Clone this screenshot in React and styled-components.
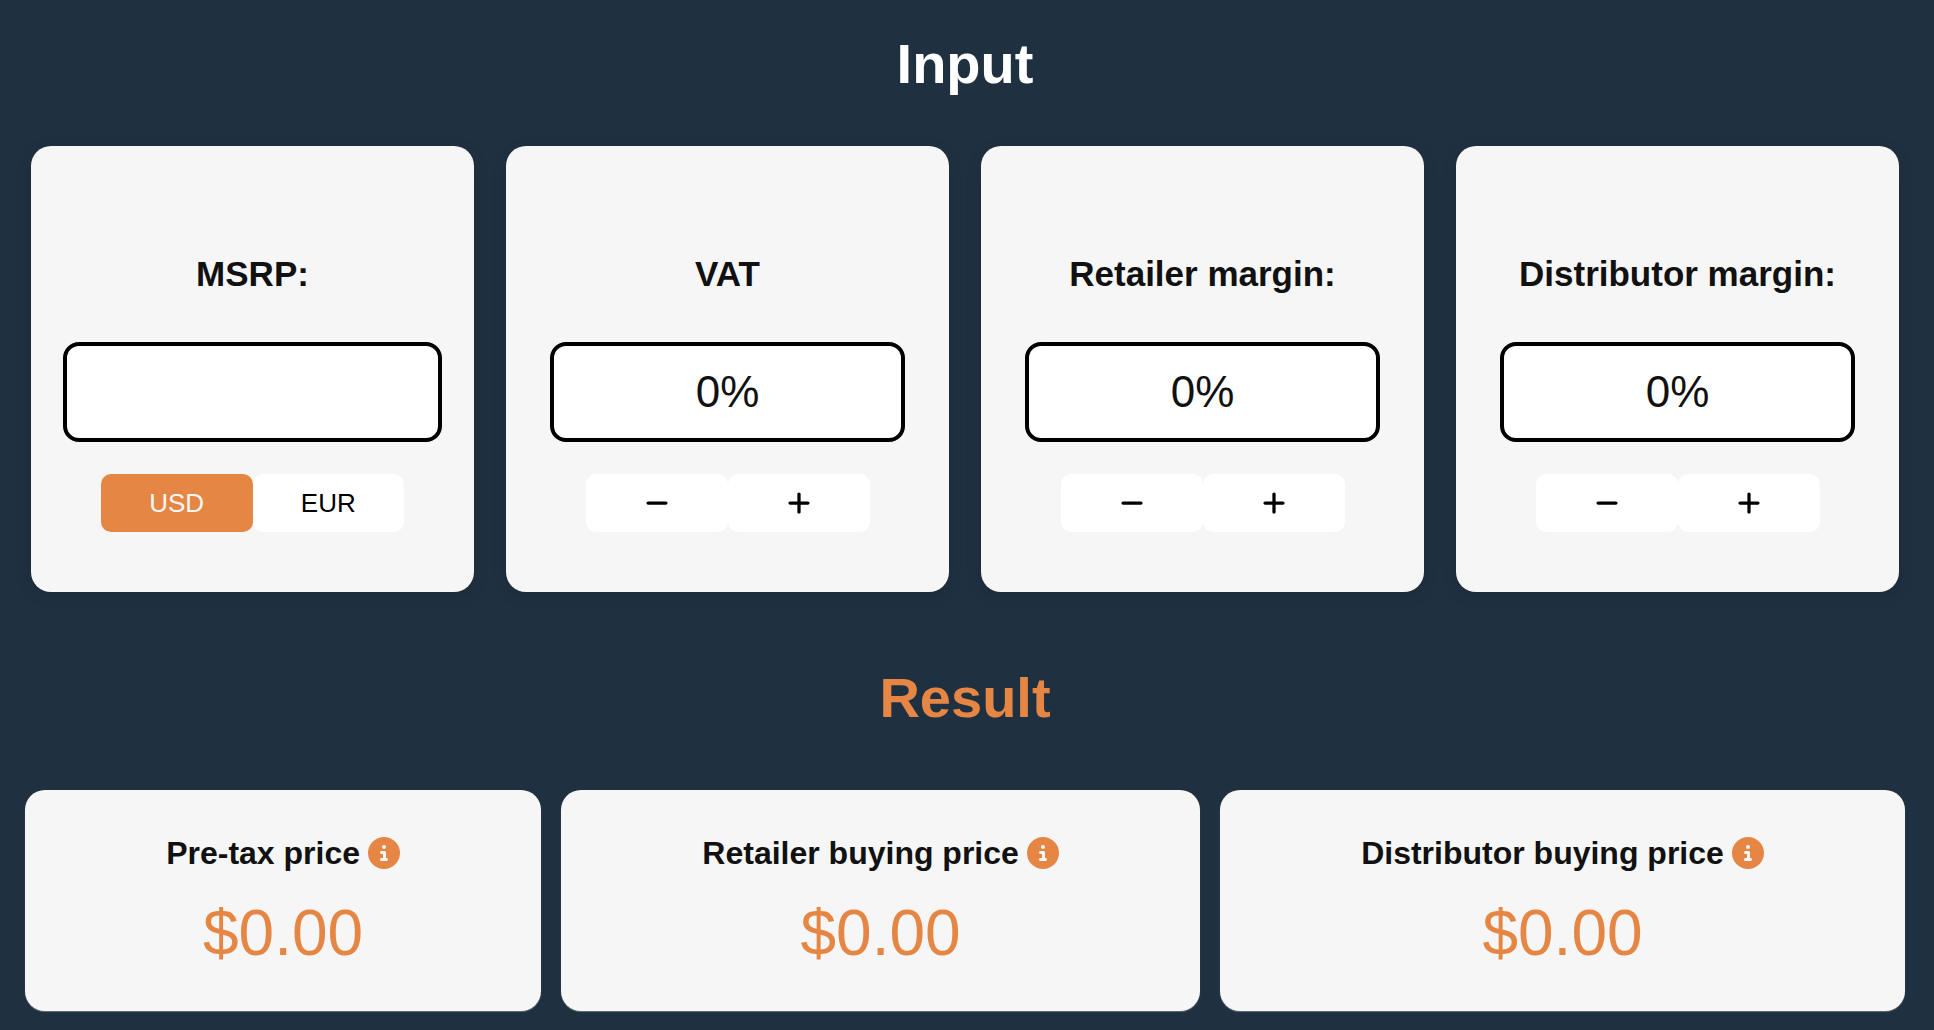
import React, { useState } from "react";
import styled, { createGlobalStyle } from "styled-components";
import { FaCircleInfo, FaMinus, FaPlus } from "react-icons/fa6";

const GlobalStyle = createGlobalStyle`
  * {
    box-sizing: border-box;
  }
  body {
    margin: 0;
    background: #1f3040;
    color: #111;
    font-family: "Liberation Sans", Arial, sans-serif;
  }
`;

const Page = styled.main`
  padding: 32px 29px 19px 25px;
`;

const SectionTitle = styled.h1`
  margin: 0;
  color: ${(props) => (props.$accent ? "#e68644" : "#fff")};
  font-size: 56px;
  line-height: 64px;
  text-align: center;
`;

const InputRow = styled.section`
  display: grid;
  grid-template-columns: repeat(4, 1fr);
  gap: 32px;
  margin: 50px 6px 74px;
`;

const InputCard = styled.div`
  display: flex;
  flex-direction: column;
  align-items: center;
  padding: 107px ${(props) => (props.$narrow ? 44 : 32)}px 60px;
  border-radius: 20px;
  background: #f6f6f6;
  box-shadow: 0 4px 16px rgba(0, 0, 0, 0.1);
`;

const Label = styled.label`
  margin-bottom: 47px;
  font-size: 35px;
  font-weight: bold;
  line-height: 42px;
  white-space: nowrap;
`;

const Field = styled.input`
  width: 100%;
  height: 100px;
  padding: 0 16px;
  border: 4px solid #000;
  border-radius: 16px;
  background: #fff;
  color: #111;
  font-family: inherit;
  font-size: 44px;
  text-align: center;
  outline: none;
`;

const ButtonGroup = styled.div`
  display: flex;
  width: 80%;
  margin-top: 32px;
`;

const Button = styled.button`
  display: flex;
  flex: 1;
  align-items: center;
  justify-content: center;
  height: 58px;
  padding: 0;
  border: none;
  border-radius: 10px;
  background: ${(props) => (props.$active ? "#e68644" : "#fff")};
  color: ${(props) => (props.$active ? "#f6f6f6" : "#000")};
  font-family: inherit;
  font-size: 26px;
  cursor: pointer;
  svg {
    width: 26px;
    height: 26px;
  }
`;

const ResultRow = styled.section`
  display: flex;
  gap: 20px;
  margin-top: 60px;
`;

const ResultCard = styled.div`
  display: flex;
  flex: 1 1 auto;
  flex-direction: column;
  align-items: center;
  gap: 25px;
  padding: 45px 32px 41px;
  border-radius: 20px;
  background: #f6f6f6;
  box-shadow: 0 1px 1px rgba(255, 255, 255, 0.3);
`;

const ResultTitle = styled.div`
  display: flex;
  align-items: center;
  gap: 8px;
  h2 {
    margin: 0;
    font-size: 32px;
    line-height: 36px;
    white-space: nowrap;
  }
`;

const InfoButton = styled.button`
  display: flex;
  padding: 0;
  border: none;
  background: none;
  color: #e68644;
  font-size: 32px;
  cursor: pointer;
`;

const Price = styled.span`
  color: #e68644;
  font-size: 64px;
  line-height: 74px;
`;

function MsrpCard({ value, onChange, currency, onCurrency }) {
  return (
    <InputCard>
      <Label htmlFor="msrp">MSRP:</Label>
      <Field
        id="msrp"
        inputMode="decimal"
        value={value}
        onChange={(e) => onChange(e.target.value)}
      />
      <ButtonGroup>
        {["USD", "EUR"].map((code) => (
          <Button
            key={code}
            type="button"
            $active={currency === code}
            onClick={() => onCurrency(code)}
          >
            {code}
          </Button>
        ))}
      </ButtonGroup>
    </InputCard>
  );
}

function PercentCard({ id, label, value, onChange }) {
  const update = (next) => onChange(Math.min(99, Math.max(0, next)));

  return (
    <InputCard $narrow>
      <Label htmlFor={id}>{label}</Label>
      <Field
        id={id}
        inputMode="numeric"
        value={`${value}%`}
        onChange={(e) => update(parseInt(e.target.value, 10) || 0)}
      />
      <ButtonGroup>
        <Button
          type="button"
          aria-label="Decrease"
          onClick={() => update(value - 1)}
        >
          <FaMinus />
        </Button>
        <Button
          type="button"
          aria-label="Increase"
          onClick={() => update(value + 1)}
        >
          <FaPlus />
        </Button>
      </ButtonGroup>
    </InputCard>
  );
}

function Result({ title, price, symbol }) {
  return (
    <ResultCard>
      <ResultTitle>
        <h2>{title}</h2>
        <InfoButton type="button" aria-label="More info">
          <FaCircleInfo />
        </InfoButton>
      </ResultTitle>
      <Price>
        {symbol}
        {price.toFixed(2)}
      </Price>
    </ResultCard>
  );
}

function App() {
  const [msrp, setMsrp] = useState("");
  const [currency, setCurrency] = useState("USD");
  const [vat, setVat] = useState(0);
  const [retailer, setRetailer] = useState(0);
  const [distributor, setDistributor] = useState(0);

  const symbol = currency === "USD" ? "$" : "€";
  const preTax = (parseFloat(msrp) || 0) / (1 + vat / 100);
  const retailerPrice = preTax * (1 - retailer / 100);
  const distributorPrice = retailerPrice * (1 - distributor / 100);

  return (
    <Page>
      <GlobalStyle />
      <SectionTitle>Input</SectionTitle>
      <InputRow>
        <MsrpCard
          value={msrp}
          onChange={setMsrp}
          currency={currency}
          onCurrency={setCurrency}
        />
        <PercentCard id="vat" label="VAT" value={vat} onChange={setVat} />
        <PercentCard
          id="retailer"
          label="Retailer margin:"
          value={retailer}
          onChange={setRetailer}
        />
        <PercentCard
          id="distributor"
          label="Distributor margin:"
          value={distributor}
          onChange={setDistributor}
        />
      </InputRow>
      <SectionTitle $accent>Result</SectionTitle>
      <ResultRow>
        <Result title="Pre-tax price" price={preTax} symbol={symbol} />
        <Result
          title="Retailer buying price"
          price={retailerPrice}
          symbol={symbol}
        />
        <Result
          title="Distributor buying price"
          price={distributorPrice}
          symbol={symbol}
        />
      </ResultRow>
    </Page>
  );
}

export default App;
